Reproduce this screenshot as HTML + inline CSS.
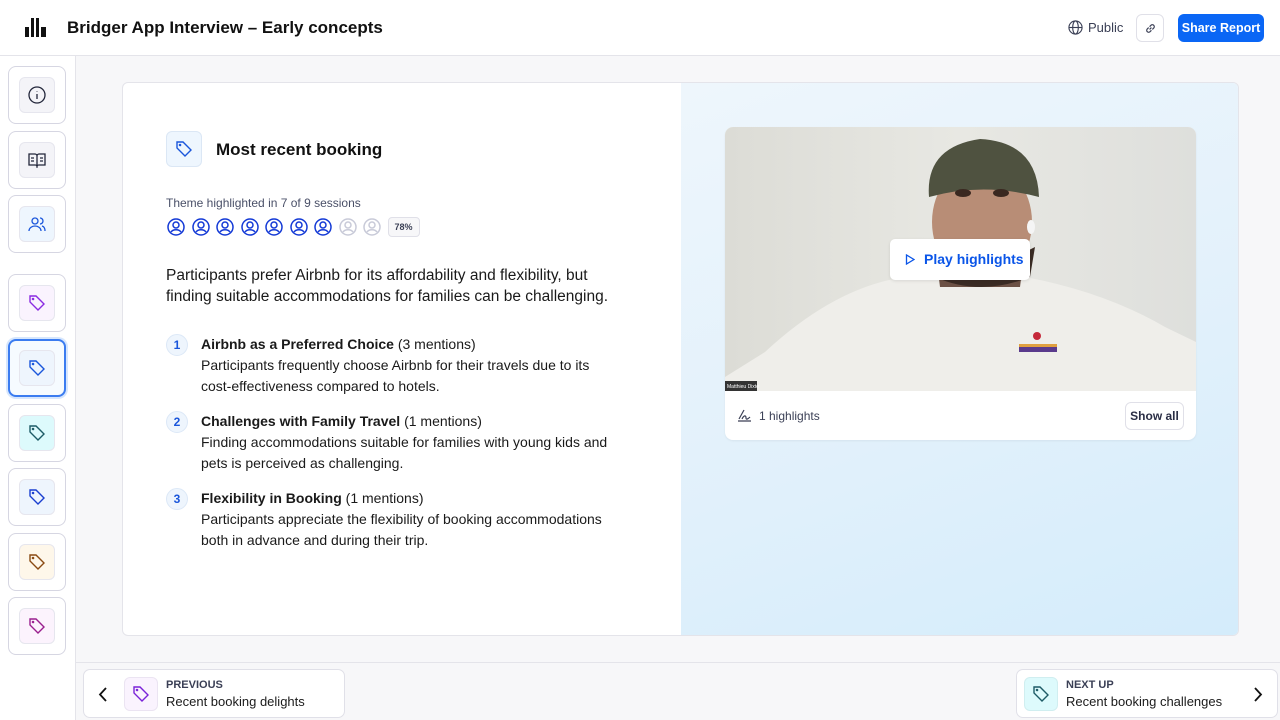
<!DOCTYPE html>
<html><head><meta charset="utf-8"><style>
*{box-sizing:border-box;margin:0;padding:0}
body{width:1280px;height:720px;overflow:hidden;font-family:"Liberation Sans",sans-serif;background:#f7f7f9;position:relative;color:#111}
.abs{position:absolute}
.hdr{left:0;top:0;width:1280px;height:56px;background:#fff;border-bottom:1px solid #e4e4ea}
.side{left:0;top:56px;width:76px;height:664px;background:#fff;border-right:1px solid #e4e4ea}
.sc{position:absolute;left:8px;width:58px;height:58px;border:1px solid #d6d6e2;border-radius:8px;background:#fff}
.sc .in{position:absolute;left:10px;top:10px;width:36px;height:36px;border-radius:6px;border:1px solid #e6e6ee;display:flex;align-items:center;justify-content:center}
svg{display:block}
.card{left:122px;top:82px;width:1117px;height:554px;background:#fff;border:1px solid #e4e4ea;border-radius:6px;overflow:hidden}
.right{position:absolute;left:558px;top:0;width:559px;height:554px;background:linear-gradient(160deg,#eef6fc 0%,#e3f1fb 50%,#d4ecfb 100%)}
.av{display:inline-block;margin-right:6.5px}
.num{position:absolute;left:166px;width:22px;height:22px;border-radius:50%;background:#eef5fd;border:1px solid #dce8f7;color:#1a56db;font-size:12px;font-weight:bold;text-align:center;line-height:20px}
.it{position:absolute;left:201px;font-size:14px;line-height:21px;color:#1a1a1a;width:425px}
.bot{left:76px;top:662px;width:1204px;height:58px;border-top:1px solid #e4e4ea;background:#f7f7f9}
.nav{position:absolute;top:669px;height:49px;background:#fff;border:1px solid #e0e0e8;border-radius:7px}
</style></head><body>
<div class="abs hdr">
 <svg class="abs" style="left:25px;top:18px" width="21" height="19" viewBox="0 0 21 19"><rect x="0" y="9" width="4" height="10" fill="#111"/><rect x="6" y="0" width="3" height="19" fill="#111"/><rect x="11" y="0" width="3" height="19" fill="#111"/><rect x="16" y="9" width="5" height="10" fill="#111"/></svg>
 <div class="abs" style="left:67px;top:18px;font-size:17px;font-weight:bold">Bridger App Interview – Early concepts</div>
 <svg class="abs" style="left:1068px;top:20px" width="15" height="15" viewBox="0 0 16 16" fill="none" stroke="#3a3f55" stroke-width="1.2"><circle cx="8" cy="8" r="7"/><ellipse cx="8" cy="8" rx="3" ry="7"/><path d="M1 8h14"/></svg>
 <div class="abs" style="left:1088px;top:20px;font-size:13px;color:#3a3f55">Public</div>
 <div class="abs" style="left:1136px;top:14px;width:28px;height:28px;border:1px solid #e0e0e8;border-radius:6px"><svg style="margin:8px" width="11" height="11" viewBox="0 0 12 12" fill="none" stroke="#3a3f55" stroke-width="1.3"><path d="M5 7l2-2M4 5L2.5 6.5a2 2 0 0 0 3 3L7 8M8 7l1.5-1.5a2 2 0 0 0-3-3L5 4"/></svg></div>
 <div class="abs" style="left:1178px;top:14px;width:86px;height:28px;background:#0a66f5;border-radius:6px;color:#fff;font-size:12.5px;font-weight:bold;text-align:center;line-height:28px">Share Report</div>
</div>
<div class="abs side">
 <div class="sc" style="top:10px;background:#fff"><div class="in" style="background:#f4f4f8"><svg width="18" height="18" viewBox="0 0 18 18" fill="none" stroke="#22263a" stroke-width="1.3"><circle cx="9" cy="9" r="8"/><path d="M9 8v5M9 5.5v.5"/></svg></div></div>
 <div class="sc" style="top:75px"><div class="in" style="background:#f4f4f8"><svg width="18" height="16" viewBox="0 0 18 16" fill="none" stroke="#22263a" stroke-width="1.3"><path d="M1 2h6a2 2 0 0 1 2 2v10a2 2 0 0 0-2-1H1zM17 2h-6a2 2 0 0 0-2 2v10a2 2 0 0 1 2-1h6z"/><path d="M3 6h3M3 9h3M12 6h3M12 9h3"/></svg></div></div>
 <div class="sc" style="top:139px"><div class="in" style="background:#eef6fe"><svg width="18" height="18" viewBox="0 0 18 18" fill="none" stroke="#1a56db" stroke-width="1.3"><circle cx="7" cy="6" r="3"/><path d="M1 16c0-3 3-5 6-5s6 2 6 5M12 3a3 3 0 0 1 0 6M14 11c2 .5 3 2.5 3 5"/></svg></div></div>
 <div class="sc" style="top:218px"><div class="in" style="background:#faf3fe"><svg width="18" height="18" viewBox="0 0 18 18" fill="none" stroke="#8a2be2" stroke-width="1.4"><path d="M2 2h6l8 8-6 6-8-8z"/><circle cx="5" cy="5" r=".6"/></svg></div></div>
 <div class="sc" style="top:283px;border:2px solid #3b7cf0;background:#f6fbff;box-shadow:0 0 0 2px #d6e6fd"><div class="in" style="left:9px;top:9px;background:#eef5fd"><svg width="18" height="18" viewBox="0 0 18 18" fill="none" stroke="#1a56db" stroke-width="1.4"><path d="M2 2h6l8 8-6 6-8-8z"/><circle cx="5" cy="5" r=".6"/></svg></div></div>
 <div class="sc" style="top:348px"><div class="in" style="background:#ddfafc"><svg width="18" height="18" viewBox="0 0 18 18" fill="none" stroke="#1d5b66" stroke-width="1.4"><path d="M2 2h6l8 8-6 6-8-8z"/><circle cx="5" cy="5" r=".6"/></svg></div></div>
 <div class="sc" style="top:412px"><div class="in" style="background:#eef5fd"><svg width="18" height="18" viewBox="0 0 18 18" fill="none" stroke="#1a3fd0" stroke-width="1.4"><path d="M2 2h6l8 8-6 6-8-8z"/><circle cx="5" cy="5" r=".6"/></svg></div></div>
 <div class="sc" style="top:477px"><div class="in" style="background:#fef7ea"><svg width="18" height="18" viewBox="0 0 18 18" fill="none" stroke="#8a4a12" stroke-width="1.4"><path d="M2 2h6l8 8-6 6-8-8z"/><circle cx="5" cy="5" r=".6"/></svg></div></div>
 <div class="sc" style="top:541px"><div class="in" style="background:#fcf3fd"><svg width="18" height="18" viewBox="0 0 18 18" fill="none" stroke="#9a1f8e" stroke-width="1.4"><path d="M2 2h6l8 8-6 6-8-8z"/><circle cx="5" cy="5" r=".6"/></svg></div></div>
</div>
<div class="abs card">
 <div class="right">
  <div style="position:absolute;left:44px;top:44px;width:471px;height:313px;background:#fff;border-radius:8px;overflow:hidden;box-shadow:0 1px 2px rgba(0,0,0,.06)">
   <svg width="471" height="264" viewBox="0 0 471 264" style="position:absolute;left:0;top:0">
    <defs><linearGradient id="wall" x1="0" x2="1"><stop offset="0" stop-color="#dcdcd6"/><stop offset=".5" stop-color="#e8e8e3"/><stop offset="1" stop-color="#dedfdc"/></linearGradient></defs>
    <rect width="471" height="264" fill="url(#wall)"/>
    <path d="M0 250 L40 225 Q110 160 180 150 L300 150 Q380 165 440 200 L471 215 L471 264 L0 264z" fill="#efeeea"/>
    <path d="M210 120 L300 120 L295 160 L215 160z" fill="#6c5145"/>
    <ellipse cx="257" cy="95" rx="50" ry="60" fill="#b88d76"/>
    <path d="M205 120 Q255 150 310 120 L305 150 Q255 170 210 150z" fill="#3a2b24"/>
    <path d="M204 70 Q200 20 255 12 Q312 15 314 70 Q258 55 204 70z" fill="#4f5240"/>
    <ellipse cx="238" cy="66" rx="8" ry="4" fill="#3a2820"/><ellipse cx="276" cy="66" rx="8" ry="4" fill="#3a2820"/>
    <ellipse cx="306" cy="100" rx="4" ry="7" fill="#f5f5f5"/>
    <circle cx="312" cy="209" r="4" fill="#c5283a"/>
    <rect x="294" y="217" width="38" height="8" fill="#5a3a8c"/><rect x="294" y="217" width="38" height="3" fill="#e0a040"/>
    <rect x="0" y="254" width="32" height="10" fill="#333"/>
    <text x="2" y="261" font-size="5" fill="#fff" font-family="Liberation Sans">Matthieu Dixte</text>
   </svg>
   <div style="position:absolute;left:165px;top:112px;width:140px;height:41px;background:#fff;border-radius:5px;box-shadow:0 1px 3px rgba(0,0,0,.1);color:#0a55e8;font-size:14px;font-weight:bold;line-height:41px"><svg style="position:absolute;left:15px;top:15px" width="10" height="11" viewBox="0 0 10 11" fill="none" stroke="#0a55e8" stroke-width="1.3"><path d="M1.5 1v9L9 5.5z"/></svg><span style="position:absolute;left:34px">Play highlights</span></div>
   <svg style="position:absolute;left:12px;top:282px" width="15" height="13" viewBox="0 0 15 13" fill="none" stroke="#3a3f55" stroke-width="1.2"><path d="M1 12h13M2 10l5-9M5 10c2-4 4-4 4-1 0 2 2 1 4-1"/></svg>
   <div style="position:absolute;left:34px;top:282px;font-size:12px;color:#3a3f55">1 highlights</div>
   <div style="position:absolute;left:400px;top:275px;width:59px;height:28px;border:1px solid #e0e0e8;border-radius:6px;font-size:12px;font-weight:bold;color:#2a2e45;text-align:center;line-height:26px">Show all</div>
  </div>
 </div>
</div>
<div class="abs" style="left:166px;top:131px;width:36px;height:36px;border-radius:6px;background:#eef6fe;border:1px solid #dbe7f5"><svg style="margin:8px" width="18" height="18" viewBox="0 0 18 18" fill="none" stroke="#1a56db" stroke-width="1.4"><path d="M2 2h6l8 8-6 6-8-8z"/><circle cx="5" cy="5" r=".6"/></svg></div>
<div class="abs" style="left:216px;top:140px;font-size:17px;font-weight:bold">Most recent booking</div>
<div class="abs" style="left:166px;top:196px;font-size:12px;color:#4a5068">Theme highlighted in 7 of 9 sessions</div>
<div class="abs" style="left:167px;top:217px;display:flex;align-items:center">
 <svg class="av" width="18" height="18" viewBox="0 0 18 18" fill="none" stroke="#1339d6" stroke-width="1.5"><circle cx="9" cy="9" r="8"/><circle cx="9" cy="7" r="3"/><path d="M4 14c2-3 8-3 10 0"/></svg>
 <svg class="av" width="18" height="18" viewBox="0 0 18 18" fill="none" stroke="#1339d6" stroke-width="1.5"><circle cx="9" cy="9" r="8"/><circle cx="9" cy="7" r="3"/><path d="M4 14c2-3 8-3 10 0"/></svg>
 <svg class="av" width="18" height="18" viewBox="0 0 18 18" fill="none" stroke="#1339d6" stroke-width="1.5"><circle cx="9" cy="9" r="8"/><circle cx="9" cy="7" r="3"/><path d="M4 14c2-3 8-3 10 0"/></svg>
 <svg class="av" width="18" height="18" viewBox="0 0 18 18" fill="none" stroke="#1339d6" stroke-width="1.5"><circle cx="9" cy="9" r="8"/><circle cx="9" cy="7" r="3"/><path d="M4 14c2-3 8-3 10 0"/></svg>
 <svg class="av" width="18" height="18" viewBox="0 0 18 18" fill="none" stroke="#1339d6" stroke-width="1.5"><circle cx="9" cy="9" r="8"/><circle cx="9" cy="7" r="3"/><path d="M4 14c2-3 8-3 10 0"/></svg>
 <svg class="av" width="18" height="18" viewBox="0 0 18 18" fill="none" stroke="#1339d6" stroke-width="1.5"><circle cx="9" cy="9" r="8"/><circle cx="9" cy="7" r="3"/><path d="M4 14c2-3 8-3 10 0"/></svg>
 <svg class="av" width="18" height="18" viewBox="0 0 18 18" fill="none" stroke="#1339d6" stroke-width="1.5"><circle cx="9" cy="9" r="8"/><circle cx="9" cy="7" r="3"/><path d="M4 14c2-3 8-3 10 0"/></svg>
 <svg class="av" width="18" height="18" viewBox="0 0 18 18" fill="none" stroke="#c8cad8" stroke-width="1.5"><circle cx="9" cy="9" r="8"/><circle cx="9" cy="7" r="3"/><path d="M4 14c2-3 8-3 10 0"/></svg>
 <svg class="av" width="18" height="18" viewBox="0 0 18 18" fill="none" stroke="#c8cad8" stroke-width="1.5"><circle cx="9" cy="9" r="8"/><circle cx="9" cy="7" r="3"/><path d="M4 14c2-3 8-3 10 0"/></svg>
 <div style="width:32px;height:20px;border:1px solid #e0e0e8;border-radius:4px;background:#f7f7f9;font-size:9px;font-weight:bold;color:#3a3f55;text-align:center;line-height:18px">78%</div>
</div>
<div class="abs" style="left:166px;top:265px;font-size:15.5px;line-height:21px;color:#1a1a1a;width:470px">Participants prefer Airbnb for its affordability and flexibility, but<br>finding suitable accommodations for families can be challenging.</div>
<div class="num" style="top:334px">1</div>
<div class="it" style="top:334px"><b>Airbnb as a Preferred Choice</b> (3 mentions)<br>Participants frequently choose Airbnb for their travels due to its cost&#8209;effectiveness compared to hotels.</div>
<div class="num" style="top:411px">2</div>
<div class="it" style="top:411px"><b>Challenges with Family Travel</b> (1 mentions)<br>Finding accommodations suitable for families with young kids and pets is perceived as challenging.</div>
<div class="num" style="top:488px">3</div>
<div class="it" style="top:488px"><b>Flexibility in Booking</b> (1 mentions)<br>Participants appreciate the flexibility of booking accommodations both in advance and during their trip.</div>
<div class="abs bot"></div>
<div class="nav" style="left:83px;width:262px">
 <svg style="position:absolute;left:14px;top:17px" width="10" height="15" viewBox="0 0 10 15" fill="none" stroke="#111" stroke-width="1.8"><path d="M8 1L2 7.5 8 14"/></svg>
 <div style="position:absolute;left:40px;top:7px;width:34px;height:34px;border-radius:6px;background:#faf3fe;border:1px solid #ebe4f2"><svg style="margin:7px" width="18" height="18" viewBox="0 0 18 18" fill="none" stroke="#7a22d8" stroke-width="1.4"><path d="M2 2h6l8 8-6 6-8-8z"/><circle cx="5" cy="5" r=".6"/></svg></div>
 <div style="position:absolute;left:82px;top:9px;font-size:11px;font-weight:bold;color:#3a3f55">PREVIOUS</div>
 <div style="position:absolute;left:82px;top:24px;font-size:13px;color:#1a1a1a">Recent booking delights</div>
</div>
<div class="nav" style="left:1016px;width:262px">
 <div style="position:absolute;left:7px;top:7px;width:34px;height:34px;border-radius:6px;background:#ddfafc;border:1px solid #d0eef0"><svg style="margin:7px" width="18" height="18" viewBox="0 0 18 18" fill="none" stroke="#1d5b66" stroke-width="1.4"><path d="M2 2h6l8 8-6 6-8-8z"/><circle cx="5" cy="5" r=".6"/></svg></div>
 <div style="position:absolute;left:49px;top:9px;font-size:11px;font-weight:bold;color:#3a3f55">NEXT UP</div>
 <div style="position:absolute;left:49px;top:24px;font-size:13px;color:#1a1a1a">Recent booking challenges</div>
 <svg style="position:absolute;left:236px;top:17px" width="10" height="15" viewBox="0 0 10 15" fill="none" stroke="#111" stroke-width="1.8"><path d="M2 1l6 6.5L2 14"/></svg>
</div>
</body></html>
